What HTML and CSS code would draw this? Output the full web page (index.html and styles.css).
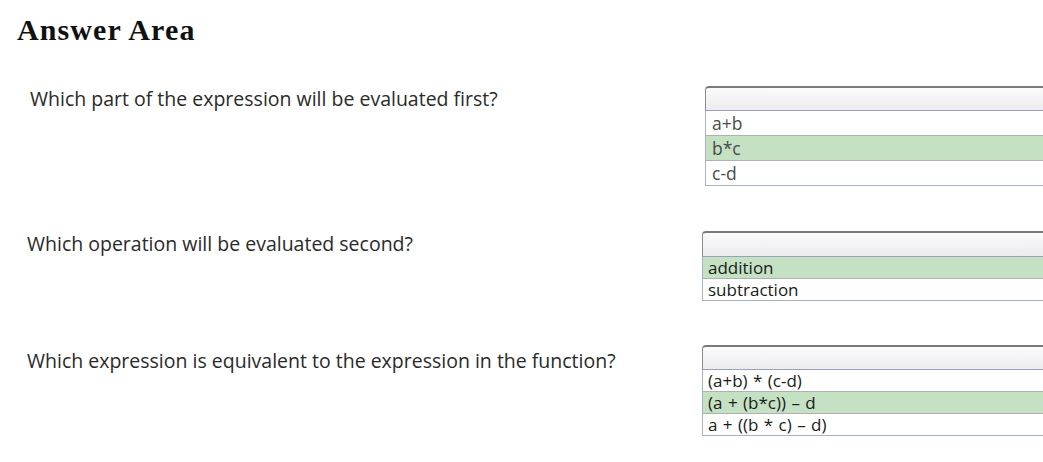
FILE: index.html
```html
<!DOCTYPE html>
<html lang="en">
<head>
<meta charset="UTF-8" />
<title>Answer Area</title>
<link rel="stylesheet" href="styles.css">
</head>
<body>

<h1>Answer Area</h1>

<div class="questions">
  <div class="row row-first">
    <div class="question">Which part of the expression will be evaluated first?</div>
    <div class="dropdown">
      <div class="select"></div>
      <ul class="options">
        <li>a+b</li>
        <li class="chosen">b*c</li>
        <li>c-d</li>
      </ul>
    </div>
  </div>

  <div class="row row-second">
    <div class="question">Which operation will be evaluated second?</div>
    <div class="dropdown">
      <div class="select"></div>
      <ul class="options">
        <li class="chosen">addition</li>
        <li>subtraction</li>
      </ul>
    </div>
  </div>

  <div class="row row-third">
    <div class="question">Which expression is equivalent to the expression in the function?</div>
    <div class="dropdown">
      <div class="select"></div>
      <ul class="options">
        <li>(a+b) * (c-d)</li>
        <li class="chosen">(a + (b*c)) &ndash; d</li>
        <li>a + ((b * c) &ndash; d)</li>
      </ul>
    </div>
  </div>
</div>

</body>
</html>
```

FILE: styles.css
```css
html, body { margin: 0; padding: 0; background: #fff; overflow: hidden; }
body { width: 1043px; height: 462px; font-family: "Open Sans", "Noto Sans", sans-serif; color: #222; }

h1 {
  margin: 0; padding: 14px 0 0 17px;
  font-family: "Liberation Serif", "Times New Roman", serif;
  font-size: 30px; font-weight: bold; letter-spacing: 1.1px; color: #111;
  line-height: 32px;
}

.questions { display: flex; flex-direction: column; }
.row { display: flex; justify-content: space-between; }
.row-first { margin-top: 40px; padding-left: 30px; }
.row-second { margin-top: 45px; padding-left: 27px; }
.row-third { margin-top: 44px; padding-left: 27px; }

.question { font-size: 19.5px; line-height: 26px; color: #2a2a2a; }
.row-third .question { padding-top: 3px; }

.dropdown { width: 350px; flex: none; margin-right: -12px; }
.row-second .dropdown, .row-third .dropdown { width: 353px; }

.select {
  height: 22px;
  border: 1px solid #8c8c8c; border-top: 2px solid #7a7a7a; border-bottom-color: #98a0bc;
  border-radius: 4px 0 0 0;
  background: linear-gradient(#fbfbfc, #ececef);
}
.row-second .select { height: 23px; }

.options {
  list-style: none; margin: 0; padding: 0;
  border: 1px solid #a9b0cc; border-top: none;
}
.options li {
  height: 24px; line-height: 24px; padding-left: 6px;
  font-size: 17.5px; color: #4a4a4a; border-top: 1px solid #b0b0b0;
}
.options li:first-child { border-top: none; }
.options li.chosen { background: #c4e2c3; }

.row-second .options li, .row-third .options li {
  height: 21px; line-height: 21px; font-size: 17px; color: #1a1a1a; padding-left: 5px;
}
.row-third .options li { word-spacing: 1px; }
```
